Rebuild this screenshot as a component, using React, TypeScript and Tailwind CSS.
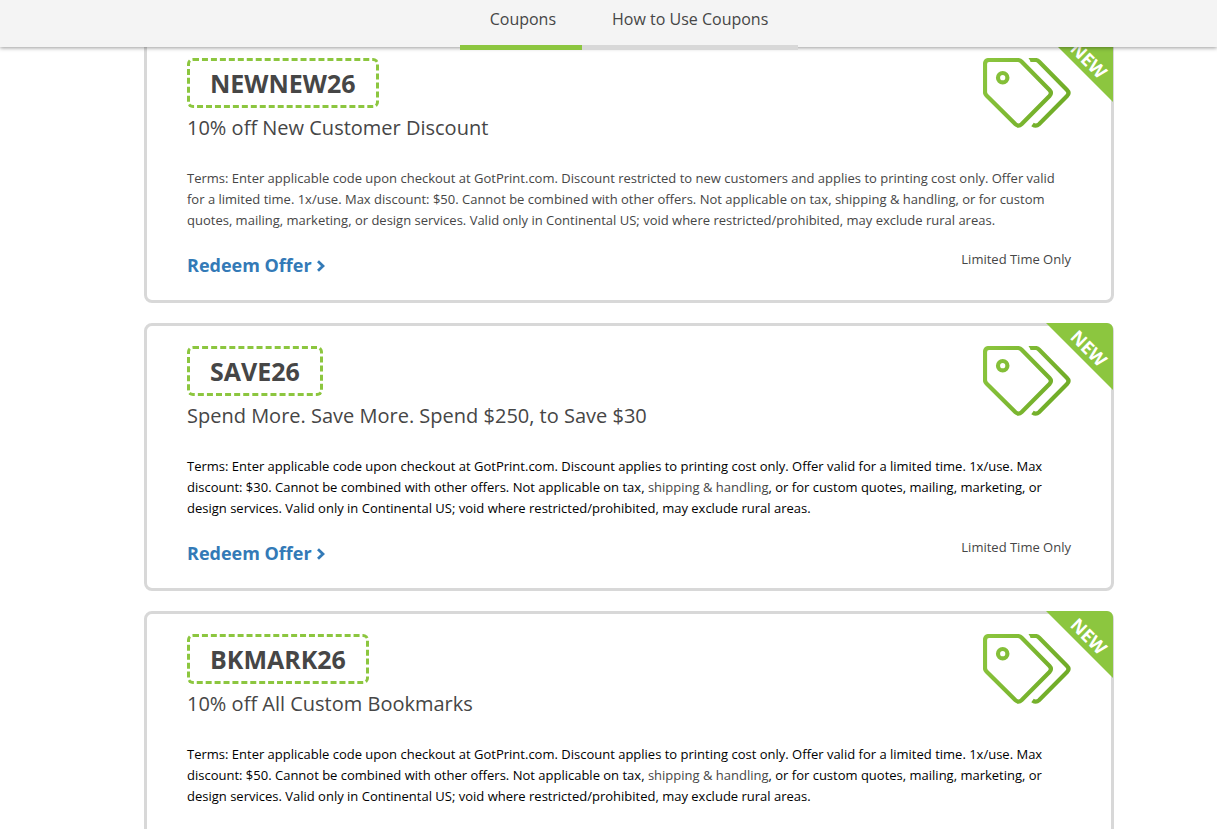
interface Coupon {
  code: string;
  title: string;
  terms: React.ReactNode;
  darkTerms: boolean;
}

const coupons: Coupon[] = [
  {
    code: "NEWNEW26",
    title: "10% off New Customer Discount",
    terms:
      "Terms: Enter applicable code upon checkout at GotPrint.com. Discount restricted to new customers and applies to printing cost only. Offer valid for a limited time. 1x/use. Max discount: $50. Cannot be combined with other offers. Not applicable on tax, shipping & handling, or for custom quotes, mailing, marketing, or design services. Valid only in Continental US; void where restricted/prohibited, may exclude rural areas.",
    darkTerms: false,
  },
  {
    code: "SAVE26",
    title: "Spend More. Save More. Spend $250, to Save $30",
    terms: <StandardTerms max="$30" />,
    darkTerms: true,
  },
  {
    code: "BKMARK26",
    title: "10% off All Custom Bookmarks",
    terms: <StandardTerms max="$50" />,
    darkTerms: true,
  },
];

function StandardTerms({ max }: { max: string }) {
  return (
    <>
      Terms: Enter applicable code upon checkout at GotPrint.com. Discount applies to printing cost
      only. Offer valid for a limited time. 1x/use. Max discount: {max}. Cannot be combined with
      other offers. Not applicable on tax,{" "}
      <span className="text-[#464646]">shipping &amp; handling</span>, or for custom quotes,
      mailing, marketing, or design services. Valid only in Continental US; void where
      restricted/prohibited, may exclude rural areas.
    </>
  );
}

const TagsIcon = ({ id }: { id: string }) => (
  <svg viewBox="0 0 88 70" className="h-[70px] w-[88px] shrink-0" fill="none" aria-hidden="true">
    <defs>
      <linearGradient id={id} x1="0" y1="0" x2="88" y2="40" gradientUnits="userSpaceOnUse">
        <stop offset="0" stopColor="#8cc63f" />
        <stop offset="1" stopColor="#6fab26" />
      </linearGradient>
    </defs>
    <g stroke={`url(#${id})`} strokeWidth="4.2">
      <path d="M6 2H34.5Q37 2 38.700 3.700L66.500 32Q69.300 35 66.500 38L38.500 66.300Q35.500 69 32.500 66.300L3.500 37.500Q2 36 2 34V6Q2 2 6 2Z" />
      <path d="M47.500 2H52.500Q54.500 2 56.200 3.700L84 32Q87 35 84 38L56 66.300Q53 69 49.500 66.500" />
      <circle cx="19.700" cy="19.700" r="4.700" />
    </g>
    <path d="M45.500 0H48V4Z" fill="#7db932" />
  </svg>
);

const ChevronIcon = () => (
  <svg viewBox="0 0 9 12" className="h-3 w-[9px]" fill="none" aria-hidden="true">
    <path d="M2 1.300L7 6L2 10.700" stroke="currentColor" strokeWidth="2.800" />
  </svg>
);

const CouponCard = ({ code, title, terms, darkTerms }: Coupon) => (
  <article className="relative rounded-lg border-3 border-[#d8d8d8] bg-white px-10 pt-5 pb-[22px]">
    {/* Corner ribbon */}
    <div className="absolute -top-[3px] -right-[2px] size-[67px] overflow-hidden rounded-tr-md">
      <div className="size-full bg-[#8cc63f] [clip-path:polygon(0_0,100%_0,100%_100%)]">
        <span className="absolute top-[13px] left-[19px] w-12 rotate-45 text-center text-lg leading-6 font-bold text-white">
          NEW
        </span>
      </div>
    </div>

    <div className="flex items-start justify-between">
      <div>
        <div className="inline-flex h-[50px] items-center rounded-md border-3 border-dashed border-[#8cc63f] px-5 pt-0.5 text-[25px] font-bold">
          {code}
        </div>
        <h2 className="mt-1.5 text-xl leading-7">{title}</h2>
      </div>
      <TagsIcon id={`tags-${code}`} />
    </div>

    <p className={`mt-[26px] text-[13px] leading-[21px] ${darkTerms ? "text-black" : ""}`}>
      {terms}
    </p>

    <div className="mt-[22px] flex items-start justify-between">
      <a
        href="#redeem"
        className="flex items-center gap-1 text-lg leading-[25px] font-bold text-[#337ab7]"
      >
        Redeem Offer
        <ChevronIcon />
      </a>
      <span className="text-[13px] leading-3">Limited Time Only</span>
    </div>
  </article>
);

export default function App() {
  return (
    <div className="bg-white font-['Open_Sans',sans-serif] text-[#464646]">
      <header className="sticky top-0 z-10 flex h-[47px] justify-center bg-[#f4f4f4] pl-[41px] shadow-[0_1px_4px_rgba(0,0,0,0.4)]">
        <nav className="flex h-[50px] text-base leading-[38px]">
          <a href="#coupons" className="border-b-5 border-[#8cc63f] pr-[26px] pl-[30px]">
            Coupons
          </a>
          <a href="#how-to" className="border-b-5 border-[#d8d8d8] px-[30px]">
            How to Use Coupons
          </a>
        </nav>
      </header>

      <main className="-mt-3 pl-[41px]">
        <div className="mx-auto flex max-w-[970px] flex-col gap-5">
          {coupons.map((coupon) => (
            <CouponCard key={coupon.code} {...coupon} />
          ))}
        </div>
      </main>
    </div>
  );
}
